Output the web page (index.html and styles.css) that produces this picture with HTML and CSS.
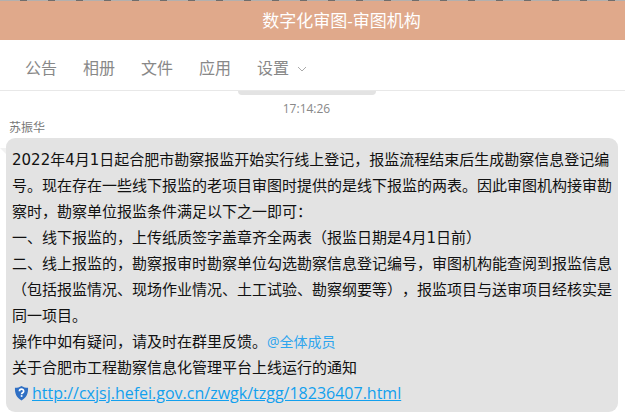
FILE: index.html
```html
<!DOCTYPE html>
<html lang="zh-CN">
<head>
  <meta charset="utf-8">
  <title>数字化审图-审图机构</title>
  <link rel="stylesheet" href="styles.css">
</head>
<body>
  <div class="top-edge"></div>
  <header class="title-bar">数字化审图-审图机构</header>

  <nav class="tabs">
    <span class="tab">公告</span>
    <span class="tab">相册</span>
    <span class="tab">文件</span>
    <span class="tab">应用</span>
    <span class="tab">设置<svg class="caret" width="10" height="6" viewBox="0 0 10 6"><path d="M1 1l4 4 4-4" fill="none" stroke="#aaa" stroke-width="1"/></svg></span>
  </nav>

  <main class="chat">
    <div class="prev-bubble"></div>
    <div class="time">17:14:26</div>
    <div class="sender">苏振华</div>
    <div class="bubble">
      <p>2022年4月1日起合肥市勘察报监开始实行线上登记，报监流程结束后生成勘察信息登记编号。现在存在一些线下报监的老项目审图时提供的是线下报监的两表。因此审图机构接审勘察时，勘察单位报监条件满足以下之一即可：</p>
      <p>一、线下报监的，上传纸质签字盖章齐全两表（报监日期是4月1日前）</p>
      <p>二、线上报监的，勘察报审时勘察单位勾选勘察信息登记编号，审图机构能查阅到报监信息（包括报监情况、现场作业情况、土工试验、勘察纲要等），报监项目与送审项目经核实是同一项目。</p>
      <p>操作中如有疑问，请及时在群里反馈。<span class="mention">@全体成员</span></p>
      <p>关于合肥市工程勘察信息化管理平台上线运行的通知</p>
      <p class="link-row">
        <svg class="shield" width="15" height="16" viewBox="0 0 16 17">
          <path d="M8 1c2 1.300 4.500 2 7 2 .2 6-1.500 10.500-7 13.500C2.500 13.500.8 9 1 3c2.500 0 5-.7 7-2z" fill="#2f6fc4"/>
          <path d="M5.800 6.600c0-3 4.500-3 4.500-.1 0 1.800-2.200 1.700-2.200 3.400" fill="none" stroke="#fff" stroke-width="1.800"/>
          <rect x="7.200" y="10.800" width="1.800" height="1.800" fill="#fff"/>
        </svg>
        <a class="link" href="#">http://cxjsj.hefei.gov.cn/zwgk/tzgg/18236407.html</a>
      </p>
    </div>
  </main>
</body>
</html>
```

FILE: styles.css
```css
html, body {
  margin: 0;
  height: 417px;
  overflow: hidden;
}

body {
  background-color: #fff;
  font-family: "Open Sans", "Noto Sans CJK SC", sans-serif;
  color: #222;
  text-spacing-trim: space-all;
}

.top-edge {
  height: 1px;
  background: repeating-linear-gradient(90deg, #b3b0ae 0, #b3b0ae 20px, #6f6d6c 20px, #6f6d6c 27px, #b3b0ae 27px, #b3b0ae 28px);
}

.title-bar {
  height: 39px;
  padding-left: 58px;
  line-height: 39px;
  background-color: #e0a98b;
  color: #fff;
  font-size: 17px;
  text-align: center;
}

.tabs {
  display: flex;
  align-items: center;
  gap: 26px;
  height: 46px;
  padding: 4px 0 0 25px;
  border-bottom: 1px solid #e8e8e8;
}

.tab {
  font-size: 16px;
  color: #888;
}

.caret {
  margin-left: 8px;
  vertical-align: 2px;
}

.prev-bubble {
  width: 138px;
  height: 4px;
  margin-left: 238px;
  background-color: #e3e3e3;
  border-radius: 0 0 8px 8px;
}

.time {
  margin-top: 6px;
  padding-right: 12px;
  font-size: 12px;
  line-height: 16px;
  color: #888;
  text-align: center;
}

.sender {
  margin: 3px 0 0 9px;
  font-size: 12px;
  line-height: 16px;
  color: #777;
}

/* DejaVu only reaches the digits here, its width is closest to the original */
.bubble {
  position: relative;
  margin: 2px 7px 0 6px;
  padding: 9px 6px 6px 6px;
  background-color: #e3e3e3;
  border-radius: 9px;
  font-family: "DejaVu Sans", "Noto Sans CJK SC", sans-serif;
  font-size: 15px;
  line-height: 26px;
  color: #111;
}

/* little tail on the left of the bubble */
.bubble::before {
  content: "";
  position: absolute;
  left: -6px;
  top: 10px;
  border-top: 6px solid #f1f1f1;
  border-left: 6px solid transparent;
}

.bubble p {
  margin: 0;
}

.mention {
  font-family: "Open Sans", "Noto Sans CJK SC", sans-serif;
  font-size: 14px;
  color: #2ea5ee;
}

.bubble .link-row {
  display: flex;
  align-items: center;
  gap: 3px;
  margin-top: -1px;
  padding-left: 2px;
}

.link {
  font-family: "Open Sans", sans-serif;
  font-size: 16px;
  color: #12a0ee;
}
```
